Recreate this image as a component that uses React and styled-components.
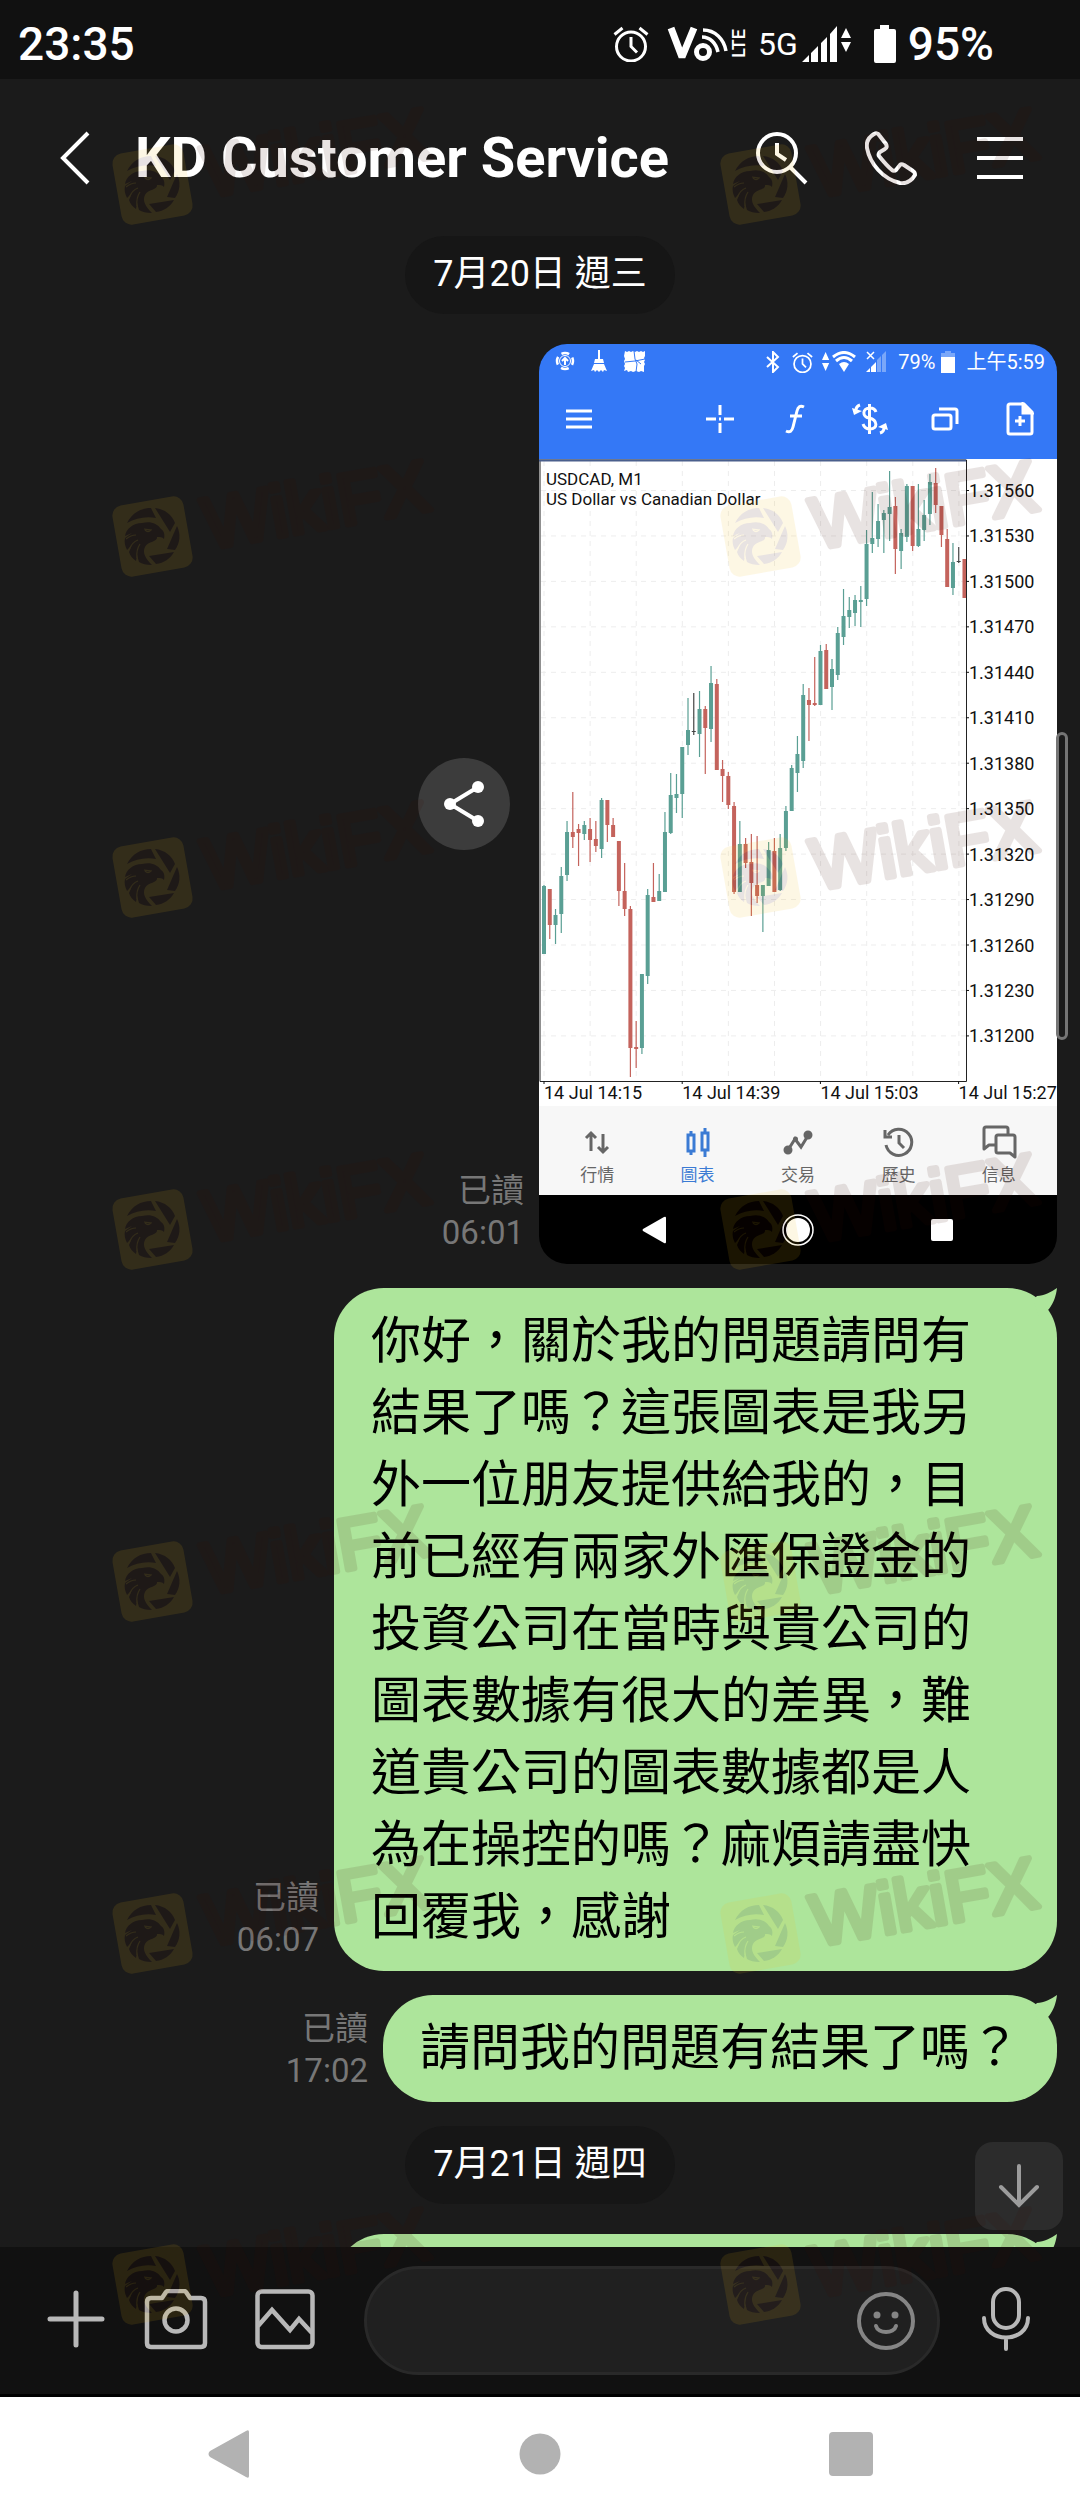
import React from 'react';
import styled, { createGlobalStyle } from 'styled-components';

const GlobalStyle = createGlobalStyle`
  * {
    box-sizing: border-box;
  }
  body {
    margin: 0;
    background-color: #1b1b1b;
    font-family: Roboto, 'Noto Sans CJK TC', sans-serif;
  }
  svg {
    display: block;
    flex-shrink: 0;
  }
  button {
    font-family: inherit;
  }
`;
const Screen = styled.div`
  position: relative;
  display: flex;
  flex-direction: column;
  height: 100vh;
  overflow: hidden;
  color: #fff;
`;
const StatusBar = styled.div`
  display: flex;
  justify-content: space-between;
  align-items: center;
  height: 79px;
  padding: 8px 86px 0 18px;
  background-color: #111;
  font-size: 46px;
  line-height: 56px;
  font-weight: 500;
`;
const StatusGroup = styled.div`
  display: flex;
  align-items: center;
`;
const StatusItem = styled.span`
  margin-left: ${(props) => props.$gap}px;
`;
const Network = styled(StatusItem)`
  font-size: 32px;
  font-weight: 400;
`;
const VolteBadge = styled(StatusItem)`
  display: flex;
  align-items: center;
  gap: 2px;
`;
const VolteLabel = styled.span`
  writing-mode: vertical-rl;
  transform: rotate(180deg);
  font-size: 18px;
  line-height: 18px;
`;
const IconButton = styled.button`
  display: flex;
  flex-direction: column;
  align-items: center;
  justify-content: center;
  flex-shrink: 0;
  width: ${(props) => props.$size || 60}px;
  height: ${(props) => props.$size || 60}px;
  padding: 0;
  border: none;
  background: none;
  color: inherit;
  cursor: pointer;
`;
const Header = styled.header`
  display: flex;
  align-items: center;
  height: 157px;
  padding: 0 50px 0 45px;
`;
const Title = styled.h1`
  flex: 1;
  margin: 0 0 0 30px;
  font-size: 56px;
  line-height: 64px;
  font-weight: 700;
  white-space: nowrap;
`;
const HeaderActions = styled.div`
  display: flex;
  gap: 49px;
`;
const Chat = styled.main`
  position: relative;
  flex: 1;
  min-height: 0;
  overflow: hidden;
`;
const MessageList = styled.div`
  display: flex;
  flex-direction: column;
  gap: 24px;
  padding-right: 23px;
`;
const DatePill = styled.div`
  align-self: center;
  margin: 0 0 6px 23px;
  padding: 17px 28px 19px;
  border-radius: 39px;
  background-color: #161616;
  font-size: 36px;
  line-height: 42px;
`;
const MessageRow = styled.div`
  display: flex;
  justify-content: flex-end;
  gap: 15px;
`;
const Side = styled.div`
  display: grid;
  justify-items: end;
`;
const Meta = styled.div`
  grid-area: 1 / 1;
  align-self: end;
  margin-bottom: 10px;
  color: #777;
  font-size: 33px;
  line-height: 42px;
  text-align: right;
`;
const ShareButton = styled.button`
  grid-area: 1 / 1;
  align-self: center;
  display: grid;
  place-items: center;
  width: 92px;
  height: 92px;
  margin-right: 14px;
  padding: 0;
  border: none;
  border-radius: 50%;
  background-color: #3c3c3c;
  cursor: pointer;
`;
const Bubble = styled.div`
  position: relative;
  max-width: 723px;
  min-height: 107px;
  padding: 17px 37px 18px;
  border-radius: 50px;
  background-color: #ade59b;
  color: #000;
  font-size: 50px;
  line-height: 72px;
`;
const FullBubble = styled(Bubble)`
  width: 723px;
`;
const Tail = styled.svg`
  position: absolute;
  top: 0;
  right: 0;
`;
const ScrollThumb = styled.div`
  position: absolute;
  top: 496px;
  right: 12px;
  width: 12px;
  height: 308px;
  border: 3px solid #757575;
  border-radius: 6px;
  background-color: #1b1b1b;
`;
const ScrollDown = styled.button`
  position: absolute;
  right: 17px;
  bottom: 17px;
  display: grid;
  place-items: center;
  width: 88px;
  height: 88px;
  padding: 0;
  border: none;
  border-radius: 18px;
  background-color: #2c2c2c;
  color: #9c9c9c;
  cursor: pointer;
`;

const Shot = styled.div`
  width: 518px;
  border-radius: 28px;
  overflow: hidden;
  background-color: #000;
`;
const ShotStatus = styled.div`
  display: flex;
  align-items: center;
  height: 36px;
  padding: 0 12px 0 16px;
  background-color: #3478f6;
  font-size: 20px;
  line-height: 24px;
`;
const ShotStatusLeft = styled.div`
  display: flex;
  gap: 14px;
  flex: 1;
`;
const ShotToolbar = styled.div`
  display: flex;
  align-items: center;
  height: 79px;
  padding: 0 17px 2px 20px;
  background-color: #3478f6;
`;
const ShotTools = styled.div`
  display: flex;
  flex: 1;
  justify-content: flex-end;
  gap: 35px;
`;
const ChartArea = styled.div`
  background-color: #fff;
  svg {
    width: 100%;
  }
`;
const Tabs = styled.nav`
  display: grid;
  grid-template-columns: repeat(5, 1fr);
  height: 89px;
  padding: 15px 8px 0;
  background-color: #f7f7f7;
`;
const Tab = styled.button`
  display: flex;
  flex-direction: column;
  align-items: center;
  gap: 0;
  padding: 0;
  border: none;
  background: none;
  color: ${(props) => (props.$active ? '#3b7bd4' : '#666')};
  font-size: 17px;
  line-height: 24px;
  cursor: pointer;
`;
const ShotNav = styled.div`
  display: grid;
  grid-template-columns: repeat(3, 1fr);
  place-items: center;
  height: 69px;
  padding: 0 43px;
`;

const Composer = styled.form`
  display: flex;
  align-items: center;
  gap: 36px;
  height: 150px;
  padding: 0 44px;
  border-bottom: 3px solid #000;
  background-color: #111;
  color: #b8b8b8;
`;
const GalleryButton = styled(IconButton)`
  margin: 0 11px 0 9px;
`;
const InputBox = styled.div`
  display: flex;
  align-items: center;
  flex: 1;
  min-width: 0;
  height: 109px;
  padding: 0 19px 0 40px;
  border: 3px solid #292929;
  border-radius: 55px;
  background-color: #202020;
  color: #858585;
`;
const TextInput = styled.input`
  flex: 1;
  min-width: 0;
  border: none;
  outline: none;
  background: none;
  color: #fff;
  font-family: inherit;
  font-size: 46px;
`;
const SystemNav = styled.nav`
  display: grid;
  grid-template-columns: repeat(3, 1fr);
  place-items: center;
  height: 123px;
  padding: 0 73px 10px;
  background-color: #fff;
  color: #b2b2b2;
`;
const WatermarkLayer = styled.svg`
  position: absolute;
  top: 0;
  left: 0;
  width: 100%;
  height: 100%;
  pointer-events: none;
`;

// [direction, high, body top, body bottom, low]
const CANDLES = [
  ['up', 885, 886, 954, 954],
  ['down', 889, 889, 925, 939],
  ['up', 909, 915, 925, 944],
  ['up', 867, 876, 914, 933],
  ['up', 821, 832, 875, 881],
  ['down', 792, 832, 837, 848],
  ['down', 824, 829, 833, 866],
  ['up', 821, 825, 834, 840],
  ['down', 818, 829, 840, 862],
  ['down', 821, 839, 846, 852],
  ['up', 798, 800, 849, 858],
  ['down', 800, 800, 825, 842],
  ['down', 818, 825, 837, 837],
  ['down', 841, 841, 891, 906],
  ['down', 863, 891, 909, 916],
  ['down', 906, 909, 1048, 1077],
  ['down', 1021, 1047, 1049, 1068],
  ['up', 974, 974, 1048, 1054],
  ['up', 889, 895, 976, 984],
  ['down', 863, 897, 902, 902],
  ['up', 874, 891, 901, 901],
  ['up', 812, 832, 892, 892],
  ['up', 773, 795, 833, 834],
  ['up', 774, 794, 798, 813],
  ['up', 747, 747, 794, 818],
  ['up', 698, 730, 745, 755],
  ['flat', 693, 731, 732, 735],
  ['up', 691, 709, 734, 757],
  ['down', 706, 709, 728, 774],
  ['up', 666, 683, 729, 742],
  ['down', 679, 684, 770, 770],
  ['down', 760, 769, 776, 802],
  ['down', 772, 776, 805, 809],
  ['down', 802, 806, 892, 894],
  ['up', 821, 844, 892, 892],
  ['down', 838, 844, 863, 868],
  ['down', 834, 862, 883, 916],
  ['down', 836, 885, 896, 903],
  ['up', 885, 885, 896, 932],
  ['up', 842, 850, 886, 886],
  ['down', 838, 851, 892, 892],
  ['up', 834, 848, 890, 891],
  ['up', 806, 811, 848, 851],
  ['up', 765, 768, 811, 811],
  ['up', 736, 754, 773, 792],
  ['up', 684, 695, 761, 768],
  ['down', 688, 700, 705, 741],
  ['down', 657, 703, 705, 706],
  ['up', 645, 651, 705, 705],
  ['down', 644, 650, 689, 689],
  ['up', 659, 669, 687, 710],
  ['up', 627, 633, 675, 680],
  ['up', 589, 616, 637, 645],
  ['up', 597, 610, 617, 628],
  ['up', 595, 600, 613, 626],
  ['up', 586, 600, 602, 627],
  ['up', 530, 544, 599, 606],
  ['up', 492, 538, 544, 553],
  ['up', 504, 521, 539, 547],
  ['up', 510, 513, 520, 553],
  ['up', 471, 507, 514, 541],
  ['down', 497, 506, 549, 574],
  ['up', 529, 533, 551, 569],
  ['up', 484, 486, 537, 542],
  ['down', 486, 486, 546, 551],
  ['up', 484, 529, 546, 547],
  ['up', 500, 515, 530, 541],
  ['up', 474, 482, 514, 525],
  ['down', 468, 483, 505, 513],
  ['down', 506, 506, 535, 547],
  ['down', 529, 539, 587, 587],
  ['up', 543, 562, 588, 595],
  ['flat', 547, 561, 562, 563],
  ['down', 559, 559, 598, 598],
];
const CANDLE_COLORS = { up: '#5a9f94', down: '#c4635c', flat: '#444' };
const CHART_TOP = 459;
const PRICES = [
  '1.31560', '1.31530', '1.31500', '1.31470', '1.31440', '1.31410', '1.31380',
  '1.31350', '1.31320', '1.31290', '1.31260', '1.31230', '1.31200',
];
const TIMES = ['14 Jul 14:15', '14 Jul 14:39', '14 Jul 15:03', '14 Jul 15:27'];
const WATERMARK_ROWS = [144, 496, 837, 1189, 1541, 1893, 2244];
const WATERMARK_COLUMNS = [112, 720];

function CandleChart() {
  const gridX = Array.from({ length: 10 }, (_, i) => 5 + i * 46.1);
  return (
    <ChartArea>
      <svg viewBox="0 0 518 647" fontFamily="Roboto, sans-serif" fontSize="18">
        <defs>
          <clipPath id="plot">
            <rect x="1" y="1" width="426" height="622" />
          </clipPath>
        </defs>
        <g stroke="#ededed" strokeDasharray="5 5">
          {gridX.map((x) => (
            <line key={x} x1={x} x2={x} y1="2" y2="622" />
          ))}
          {PRICES.map((price, i) => (
            <line key={price} x1="2" x2="427" y1={31.5 + i * 45.45} y2={31.5 + i * 45.45} />
          ))}
        </g>
        <g clipPath="url(#plot)">
          {CANDLES.map(([dir, high, top, bottom, low], i) => {
            const x = 5 + i * 5.76;
            return (
              <g key={i} fill={CANDLE_COLORS[dir]}>
                <rect x={x - 0.6} y={high - CHART_TOP} width="1.2" height={low - high} />
                <rect x={x - 2} y={top - CHART_TOP} width="4" height={bottom - top} />
              </g>
            );
          })}
        </g>
        <path d="M0 1H427.500V622.500H1V1" fill="none" stroke="#222" />
        <path d="M427 1.500H0" stroke="#4a5f8c" strokeWidth="2" />
        <g fill="#111">
          <text x="7" y="26" fontSize="17">USDCAD, M1</text>
          <text x="7" y="46" fontSize="17">US Dollar vs Canadian Dollar</text>
          {PRICES.map((price, i) => (
            <g key={price}>
              <rect x="427" y={31 + i * 45.45} width="3" height="1" />
              <text x="430" y={38 + i * 45.45}>{price}</text>
            </g>
          ))}
          {TIMES.map((time, i) => (
            <g key={time}>
              <rect x={4.5 + i * 138.2} y="622" width="1" height="3" />
              <text x={5 + i * 138.2} y="640">{time}</text>
            </g>
          ))}
        </g>
      </svg>
    </ChartArea>
  );
}

function AlarmIcon({ size }) {
  return (
    <svg width={size} height={size} viewBox="0 0 36 36" fill="none" stroke="currentColor" strokeWidth="3">
      <circle cx="18" cy="20.500" r="14.500" />
      <path d="M18 11v9.500l6 6M1.500 8.500l8-6.500M34.500 8.500l-8-6.500" />
    </svg>
  );
}

// handset carrier badge: tick, ring and radio waves
function VolteIcon() {
  return (
    <svg width="61" height="36" viewBox="0 0 61 36" fill="none" stroke="currentColor">
      <path d="M4 2L15 31L27 2" strokeWidth="7" strokeLinejoin="bevel" />
      <circle cx="36" cy="26" r="6.500" strokeWidth="5" />
      <path d="M35 11c8 0 14 6 16 15" strokeWidth="3.500" />
      <path d="M36 4c12 0 21 9 23 21" strokeWidth="3.500" />
    </svg>
  );
}

function SignalIcon() {
  return (
    <svg width="50" height="38" viewBox="0 0 50 38" fill="currentColor">
      <path d="M0 37l7-7v7zM9 28l7-7v16H9zM19 18l6-6v25h-6zM28 9l7-8v36h-7z" />
      <path d="M39 13l5-10 5 10zM39 17h10l-5 10z" />
    </svg>
  );
}

function BatteryIcon() {
  return (
    <svg width="22" height="38" viewBox="0 0 22 38" fill="currentColor">
      <path d="M6 0h9v4h5a2 2 0 0 1 2 2v30a2 2 0 0 1-2 2H2a2 2 0 0 1-2-2V6a2 2 0 0 1 2-2h4z" />
    </svg>
  );
}

function MessageTail() {
  return (
    <Tail width="30" height="30" viewBox="0 0 30 30" fill="#ade59b">
      <path d="M6 12L10 8C17 8 24 4 30 0C29 8 27 14 22 21L12 30Z" />
    </Tail>
  );
}

function Message({ time, children }) {
  return (
    <MessageRow>
      <Side>
        <Meta>
          已讀
          <br />
          {time}
        </Meta>
      </Side>
      <Bubble>
        {children}
        <MessageTail />
      </Bubble>
    </MessageRow>
  );
}

function TradingShot() {
  return (
    <Shot>
      <ShotStatus>
        <ShotStatusLeft>
          <svg width="20" height="22" viewBox="0 0 20 22" fill="none" stroke="#fff" strokeWidth="2">
            <circle cx="10" cy="11" r="8" strokeWidth="2.500" strokeDasharray="8 4.600" strokeDashoffset="4" />
            <circle cx="10" cy="11" r="5.500" strokeWidth="1" />
            <path d="M10 15V8M7 11l3-3 3 3" />
          </svg>
          <svg width="20" height="22" viewBox="0 0 20 22" fill="#fff">
            <path d="M9 0h2v9h3l1 4H5l1-4h3zM5 14h10l3 7-3-1-1 2-2-2-2 2-2-2-2 2-1-2-3 1z" />
          </svg>
          <svg width="24" height="24" viewBox="0 0 24 24">
            <path d="M2 1l2 1 2-1 2 1 2-1 2 1 2-1 2 1 2-1 2 1 2-1v5l-1 2 1 2-1 2 1 2-1 2v6l-3-1-2 1-3-1-3 1-2-1-3 1-1-2-3 1 1-3-1-2 1-2-1-3 1-2-1-3z" fill="#fff" />
            <path d="M11 1l1 8 2 5-1 8M2 12l10-1 10-2M13 10l5 4" fill="none" stroke="#3478f6" />
          </svg>
        </ShotStatusLeft>
        <svg width="14" height="22" viewBox="0 0 14 22" fill="none" stroke="#fff" strokeWidth="2">
          <path d="M1 6l11 10-5 5V1l5 5L1 16" />
        </svg>
        <StatusItem $gap={12}>
          <AlarmIcon size={21} />
        </StatusItem>
        <StatusItem $gap={9}>
          <svg width="34" height="22" viewBox="0 0 34 22" fill="#fff">
            <path d="M0 9l4-8 4 8zM0 12h8l-4 8z" transform="scale(.9 1)" />
            <g fill="none" stroke="#fff" strokeWidth="3">
              <path d="M11 6q11-9 22 0M14 10q8-7 16 0" />
            </g>
            <path d="M17 13q5-4 10 0l-5 8z" />
          </svg>
        </StatusItem>
        <StatusItem $gap={10}>
          <svg width="20" height="22" viewBox="0 0 20 22" fill="#fff">
            <path d="M0 21l4-4v4zM5 16l5-5v10H5z" />
            <path d="M11 9l4-4v16h-4zM16 4l4-4v21h-4z" opacity=".35" />
            <path d="M1 1l7 7M8 1L1 8" stroke="#fff" strokeWidth="1.500" />
          </svg>
        </StatusItem>
        <StatusItem $gap={12}>79%</StatusItem>
        <StatusItem $gap={6}>
          <svg width="14" height="22" viewBox="0 0 14 22" fill="#fff">
            <path d="M4 0h6v2h4v4H0V2h4z" opacity=".35" />
            <path d="M0 6h14v16H0z" />
          </svg>
        </StatusItem>
        <StatusItem $gap={11}>上午5:59</StatusItem>
      </ShotStatus>
      <ShotToolbar>
        <IconButton $size={40} aria-label="Menu">
          <svg width="26" height="20" viewBox="0 0 26 20" stroke="#fff" strokeWidth="3">
            <path d="M0 2h26M0 10h26M0 18h26" />
          </svg>
        </IconButton>
        <ShotTools>
          <IconButton $size={40} aria-label="Crosshair">
            <svg width="30" height="30" viewBox="0 0 30 30" stroke="#fff" strokeWidth="3">
              <path d="M1 15h10M19 15h10M15 1v10M15 19v10M14 15h2" />
            </svg>
          </IconButton>
          <IconButton $size={40} aria-label="Indicators">
            <svg width="22" height="30" viewBox="0 0 22 30" fill="none" stroke="#fff" strokeWidth="3">
              <path d="M20 3c-4-2-6 0-7 4l-4 16c-1 4-3 6-7 4M6 12h12" />
            </svg>
          </IconButton>
          <IconButton $size={40} aria-label="Trade">
            <svg width="36" height="32" viewBox="0 0 36 32" fill="none" stroke="#fff" strokeWidth="3">
              <path d="M24 9c-1-3-3-4-6-4-8 0-8 9-1 10 9 2 9 11 1 11-4 0-6-2-7-5M17.500 1v30" />
              <path d="M8 2C5 3 4 5 4 7M28 30c3-1 4-3 4-5" strokeWidth="3" />
              <path d="M0 5l2 7 8-4zM26 24l8-4 2 7z" fill="#fff" stroke="none" />
            </svg>
          </IconButton>
          <IconButton $size={40} aria-label="Windows">
            <svg width="28" height="26" viewBox="0 0 28 26" fill="none" stroke="#fff" strokeWidth="3">
              <rect x="2" y="9" width="18" height="14" rx="2" />
              <path d="M8 3h16a2 2 0 0 1 2 2v13" />
            </svg>
          </IconButton>
          <IconButton $size={40} aria-label="New order">
            <svg width="28" height="34" viewBox="0 0 28 34" fill="none" stroke="#fff" strokeWidth="3">
              <path d="M4 2h14l8 8v20a2 2 0 0 1-2 2H4a2 2 0 0 1-2-2V4a2 2 0 0 1 2-2z" />
              <path d="M17 2v9h9z" fill="#fff" />
              <path d="M14 14v10M9 19h10" />
            </svg>
          </IconButton>
        </ShotTools>
      </ShotToolbar>
      <CandleChart />
      <Tabs>
        <Tab>
          <svg width="36" height="42" viewBox="0 0 36 42" fill="none" stroke="currentColor" strokeWidth="3">
            <path d="M12 30V12M7 17l5-5 5 5M24 13v18M19 26l5 5 5-5" />
          </svg>
          行情
        </Tab>
        <Tab $active>
          <svg width="36" height="42" viewBox="0 0 36 42" fill="none" stroke="currentColor" strokeWidth="3">
            <path d="M8 14h6v16H8zM11 14v-4M11 30v4M22 12h6v17h-6zM25 12V7M25 29v7" />
          </svg>
          圖表
        </Tab>
        <Tab>
          <svg width="36" height="42" viewBox="0 0 36 42" fill="none" stroke="currentColor" strokeWidth="3">
            <path d="M8 29l7-11 6 8 8-13" />
            <circle cx="8" cy="29" r="3" fill="currentColor" />
            <circle cx="28" cy="14" r="3" fill="currentColor" />
            <circle cx="15.500" cy="18" r="1" fill="currentColor" />
          </svg>
          交易
        </Tab>
        <Tab>
          <svg width="36" height="42" viewBox="0 0 36 42" fill="none" stroke="currentColor" strokeWidth="3">
            <path d="M6 24a13 13 0 1 0 2-10M5 9v7h7M19 14v8l5 5" />
          </svg>
          歷史
        </Tab>
        <Tab>
          <svg width="36" height="42" viewBox="0 0 36 42" fill="none" stroke="currentColor" strokeWidth="3" strokeLinejoin="round">
            <path d="M27 14V8a2 2 0 0 0-2-2H5a2 2 0 0 0-2 2v20l5-4h7" />
            <path d="M17 14h15a2 2 0 0 1 2 2v20l-5-4H17a2 2 0 0 1-2-2V16a2 2 0 0 1 2-2z" />
          </svg>
          信息
        </Tab>
      </Tabs>
      <ShotNav>
        <IconButton $size={40} aria-label="Back">
          <svg width="24" height="28" viewBox="0 0 24 28" fill="#fff">
            <path d="M22 1q2-1 2 1v24q0 2-2 1L1 15q-1-1 0-2z" />
          </svg>
        </IconButton>
        <IconButton $size={40} aria-label="Home">
          <svg width="32" height="32" viewBox="0 0 32 32">
            <circle cx="16" cy="16" r="12" fill="#fff" />
            <circle cx="16" cy="16" r="15" fill="none" stroke="#fff" strokeWidth="1.500" />
          </svg>
        </IconButton>
        <IconButton $size={40} aria-label="Recents">
          <svg width="22" height="22" viewBox="0 0 22 22" fill="#fff">
            <rect width="22" height="22" rx="2" />
          </svg>
        </IconButton>
      </ShotNav>
    </Shot>
  );
}

function Watermarks() {
  return (
    <WatermarkLayer aria-hidden="true">
      <defs>
        <g id="mark" opacity=".11">
          <rect x="4.500" y="4.500" width="72" height="72" rx="10" fill="#f5be14" transform="rotate(-10 40.500 40.500)" />
          <g fill="#3c0a00">
            <path d="M15 27C20 17 29 12 39 12L44 22C34 20 24 22 15 27Z" />
            <path d="M43 12C53 13 60 19 63 27L58 36Z" />
            <path d="M65 30C69 38 68 47 63 54L55 53Z" />
            <path d="M37 60L62 56C58 63 52 67 44 68Z" />
            <path d="M13 40C14 33 21 27 30 27C38 25 45 27 49 33C52 35 53 38 52 43C50 41 48 41 45 41C46 46 36 45 33 51C30 57 34 63 40 69C34 69 30 68 27 66L25 59L24 65C21 63 18 60 17 56L20 49L15 54C13 50 12 46 13 42L20 37Z" />
          </g>
          <path d="M32 33l7 1q-3 3-6 0M14 43q5-4 10-4M17 54q3-8 9-10M25 62q-1-8 3-14" fill="none" stroke="#f5be14" strokeWidth="1.200" />
          <text
            x="96"
            y="53"
            transform="rotate(-10 96 53)"
            fontFamily="Liberation Sans, sans-serif"
            fontSize="72"
            fill="#3c0a00"
            stroke="#3c0a00"
            strokeWidth="6"
            strokeLinejoin="round"
          >
            WikiFX
          </text>
        </g>
      </defs>
      {WATERMARK_ROWS.map((y) =>
        WATERMARK_COLUMNS.map((x) => <use key={`${x}-${y}`} href="#mark" x={x} y={y} />)
      )}
    </WatermarkLayer>
  );
}

export default function App() {
  return (
    <Screen>
      <GlobalStyle />
      <StatusBar>
        <span>23:35</span>
        <StatusGroup>
          <AlarmIcon size={36} />
          <VolteBadge $gap={18}>
            <VolteIcon />
            <VolteLabel>LTE</VolteLabel>
          </VolteBadge>
          <Network $gap={10}>5G</Network>
          <StatusItem $gap={4}>
            <SignalIcon />
          </StatusItem>
          <StatusItem $gap={22}>
            <BatteryIcon />
          </StatusItem>
          <StatusItem $gap={12}>95%</StatusItem>
        </StatusGroup>
      </StatusBar>
      <Header>
        <IconButton aria-label="Back">
          <svg width="30" height="54" viewBox="0 0 30 54" fill="none" stroke="#fff" strokeWidth="4">
            <path d="M28 2L3 27l25 25" />
          </svg>
        </IconButton>
        <Title>KD Customer Service</Title>
        <HeaderActions>
          <IconButton aria-label="Search">
            <svg width="52" height="54" viewBox="0 0 52 54" fill="none" stroke="#fff" strokeWidth="4">
              <circle cx="21" cy="22" r="19" />
              <path d="M34 36l16 16M21 12v11l9 6" />
            </svg>
          </IconButton>
          <IconButton aria-label="Call">
            <svg width="52" height="54" viewBox="0 0 52 54" fill="none" stroke="#fff" strokeWidth="4" strokeLinejoin="round">
              <path d="M9 3C4 6 1 11 2 17C5 33 18 48 35 52C42 53 47 49 50 44C50 42 50 41 48 40L39 34C37 33 36 33 35 34L31 39C30 40 28 40 27 39C22 35 18 30 14 25C13 24 14 22 15 21L20 18C22 17 22 15 21 13L14 4C13 2 11 2 9 3Z" />
            </svg>
          </IconButton>
          <IconButton aria-label="Menu">
            <svg width="46" height="44" viewBox="0 0 46 44" stroke="#fff" strokeWidth="4">
              <path d="M0 3h46M0 22h46M0 41h46" />
            </svg>
          </IconButton>
        </HeaderActions>
      </Header>
      <Chat>
        <MessageList>
          <DatePill>7月20日 週三</DatePill>
          <MessageRow>
            <Side>
              <ShareButton aria-label="Share">
                <svg width="40" height="46" viewBox="0 0 40 46" fill="#fff">
                  <path d="M34 6L6 23l28 17" fill="none" stroke="#fff" strokeWidth="4" />
                  <circle cx="34" cy="6" r="6" />
                  <circle cx="6" cy="23" r="6" />
                  <circle cx="34" cy="40" r="6" />
                </svg>
              </ShareButton>
              <Meta>
                已讀
                <br />
                06:01
              </Meta>
            </Side>
            <TradingShot />
          </MessageRow>
          <Message time="06:07">
            你好，關於我的問題請問有結果了嗎？這張圖表是我另外一位朋友提供給我的，目前已經有兩家外匯保證金的投資公司在當時與貴公司的圖表數據有很大的差異，難道貴公司的圖表數據都是人為在操控的嗎？麻煩請盡快回覆我，感謝
          </Message>
          <Message time="17:02">請問我的問題有結果了嗎？</Message>
          <DatePill>7月21日 週四</DatePill>
          <MessageRow>
            <FullBubble>
              <MessageTail />
            </FullBubble>
          </MessageRow>
        </MessageList>
        <ScrollThumb />
        <ScrollDown aria-label="Scroll to latest">
          <svg width="42" height="46" viewBox="0 0 42 46" fill="none" stroke="currentColor" strokeWidth="4" strokeLinecap="round">
            <path d="M21 3v39M3 24l18 18 18-18" />
          </svg>
        </ScrollDown>
      </Chat>
      <Composer onSubmit={(e) => e.preventDefault()}>
        <IconButton type="button" $size={64} aria-label="More">
          <svg width="58" height="62" viewBox="0 0 58 62" stroke="currentColor" strokeWidth="5" strokeLinecap="round">
            <path d="M3 29h52M29 3v52" />
          </svg>
        </IconButton>
        <IconButton type="button" $size={64} aria-label="Camera">
          <svg width="64" height="64" viewBox="0 0 64 64" fill="none" stroke="currentColor" strokeWidth="4.500" strokeLinejoin="round">
            <path d="M7 9h11l4-6q1-1 2-1h16q1 0 2 1l4 6h11q4 0 4 4v41q0 4-4 4H7q-4 0-4-4V13q0-4 4-4z" />
            <circle cx="32" cy="31" r="11.500" />
          </svg>
        </IconButton>
        <GalleryButton type="button" $size={64} aria-label="Gallery">
          <svg width="60" height="64" viewBox="0 0 60 64" fill="none" stroke="currentColor" strokeWidth="4.500">
            <rect x="2.500" y="2.500" width="55" height="55.500" rx="4" />
            <path d="M3 37l14-16 18 20 9-11 13 14" />
          </svg>
        </GalleryButton>
        <InputBox>
          <TextInput type="text" aria-label="Message" />
          <IconButton type="button" $size={64} aria-label="Stickers">
            <svg width="60" height="60" viewBox="0 0 60 60" fill="none" stroke="currentColor" strokeWidth="4">
              <circle cx="30" cy="30" r="27" />
              <path d="M20 35c2 8 18 8 20 0" strokeLinecap="round" />
              <circle cx="21" cy="24" r="3.500" fill="currentColor" stroke="none" />
              <circle cx="39" cy="24" r="3.500" fill="currentColor" stroke="none" />
            </svg>
          </IconButton>
        </InputBox>
        <IconButton type="button" aria-label="Voice message">
          <svg width="50" height="70" viewBox="0 0 50 70" fill="none" stroke="currentColor" strokeWidth="4" strokeLinecap="round">
            <rect x="12" y="3" width="26" height="39" rx="13" />
            <path d="M3 32c0 26 44 26 44 0M25 52v11" />
          </svg>
        </IconButton>
      </Composer>
      <SystemNav>
        <IconButton aria-label="Back">
          <svg width="42" height="48" viewBox="0 0 42 48" fill="currentColor">
            <path d="M38 1q3-2 3 1v44q0 3-3 1L2 27q-3-3 0-6z" />
          </svg>
        </IconButton>
        <IconButton aria-label="Home">
          <svg width="42" height="42" viewBox="0 0 42 42" fill="currentColor">
            <circle cx="21" cy="21" r="20.500" />
          </svg>
        </IconButton>
        <IconButton aria-label="Recents">
          <svg width="44" height="44" viewBox="0 0 44 44" fill="currentColor">
            <rect width="44" height="44" rx="4" />
          </svg>
        </IconButton>
      </SystemNav>
      <Watermarks />
    </Screen>
  );
}
